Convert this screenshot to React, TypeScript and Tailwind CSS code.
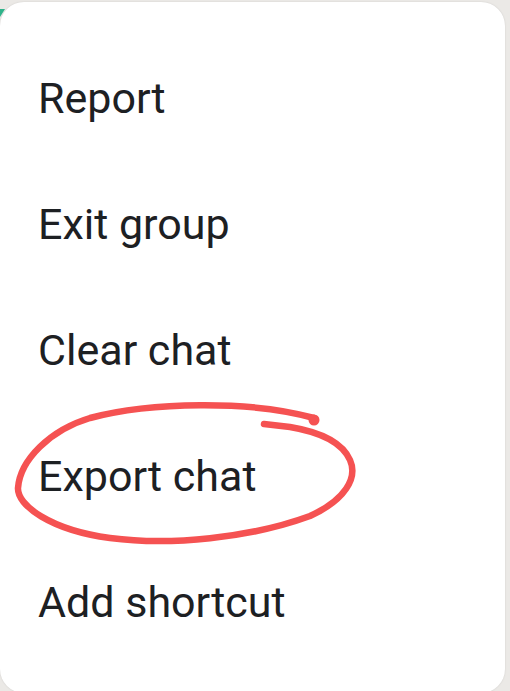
const items = ['Report', 'Exit group', 'Clear chat', 'Export chat', 'Add shortcut'];

export default function App() {
  return (
    <div className="relative w-[510px] h-[691px] overflow-hidden bg-[#ebe9e6]">
      {/* bit of the screen behind the menu */}
      <div className="absolute left-0 top-[9px] w-0 h-0 border-t-[8px] border-t-[#2fb38a] border-r-[5px] border-r-transparent" />
      <div className="relative mt-[2px] w-[505px] h-[691px] rounded-[24px] bg-white shadow-[0_0_2px_rgba(0,0,0,0.12)] pt-[33px]">
        {items.map((item) => (
          <div
            key={item}
            className="h-[126px] leading-[126px] pl-[38px] text-[43px] text-[#1d2023]"
            style={{ fontFamily: 'Roboto, "Noto Sans", sans-serif' }}
          >
            {item}
          </div>
        ))}
      </div>
      <svg
        className="absolute left-0 top-0 pointer-events-none"
        width="510"
        height="691"
        viewBox="0 0 510 691"
        fill="none"
      >
        <path
          d="M 314 418 C 250 400, 150 402, 90 418 C 50 430, 20 460, 18 488 C 17 505, 50 530, 110 538 C 170 546, 250 538, 310 516 C 345 500, 358 478, 350 460 C 342 442, 320 432, 290 427 L 264 424"
          stroke="#f55252"
          strokeWidth="6.5"
          strokeLinecap="round"
          strokeLinejoin="round"
        />
        <circle cx="314" cy="420" r="5.5" fill="#f55252" />
      </svg>
    </div>
  );
}
